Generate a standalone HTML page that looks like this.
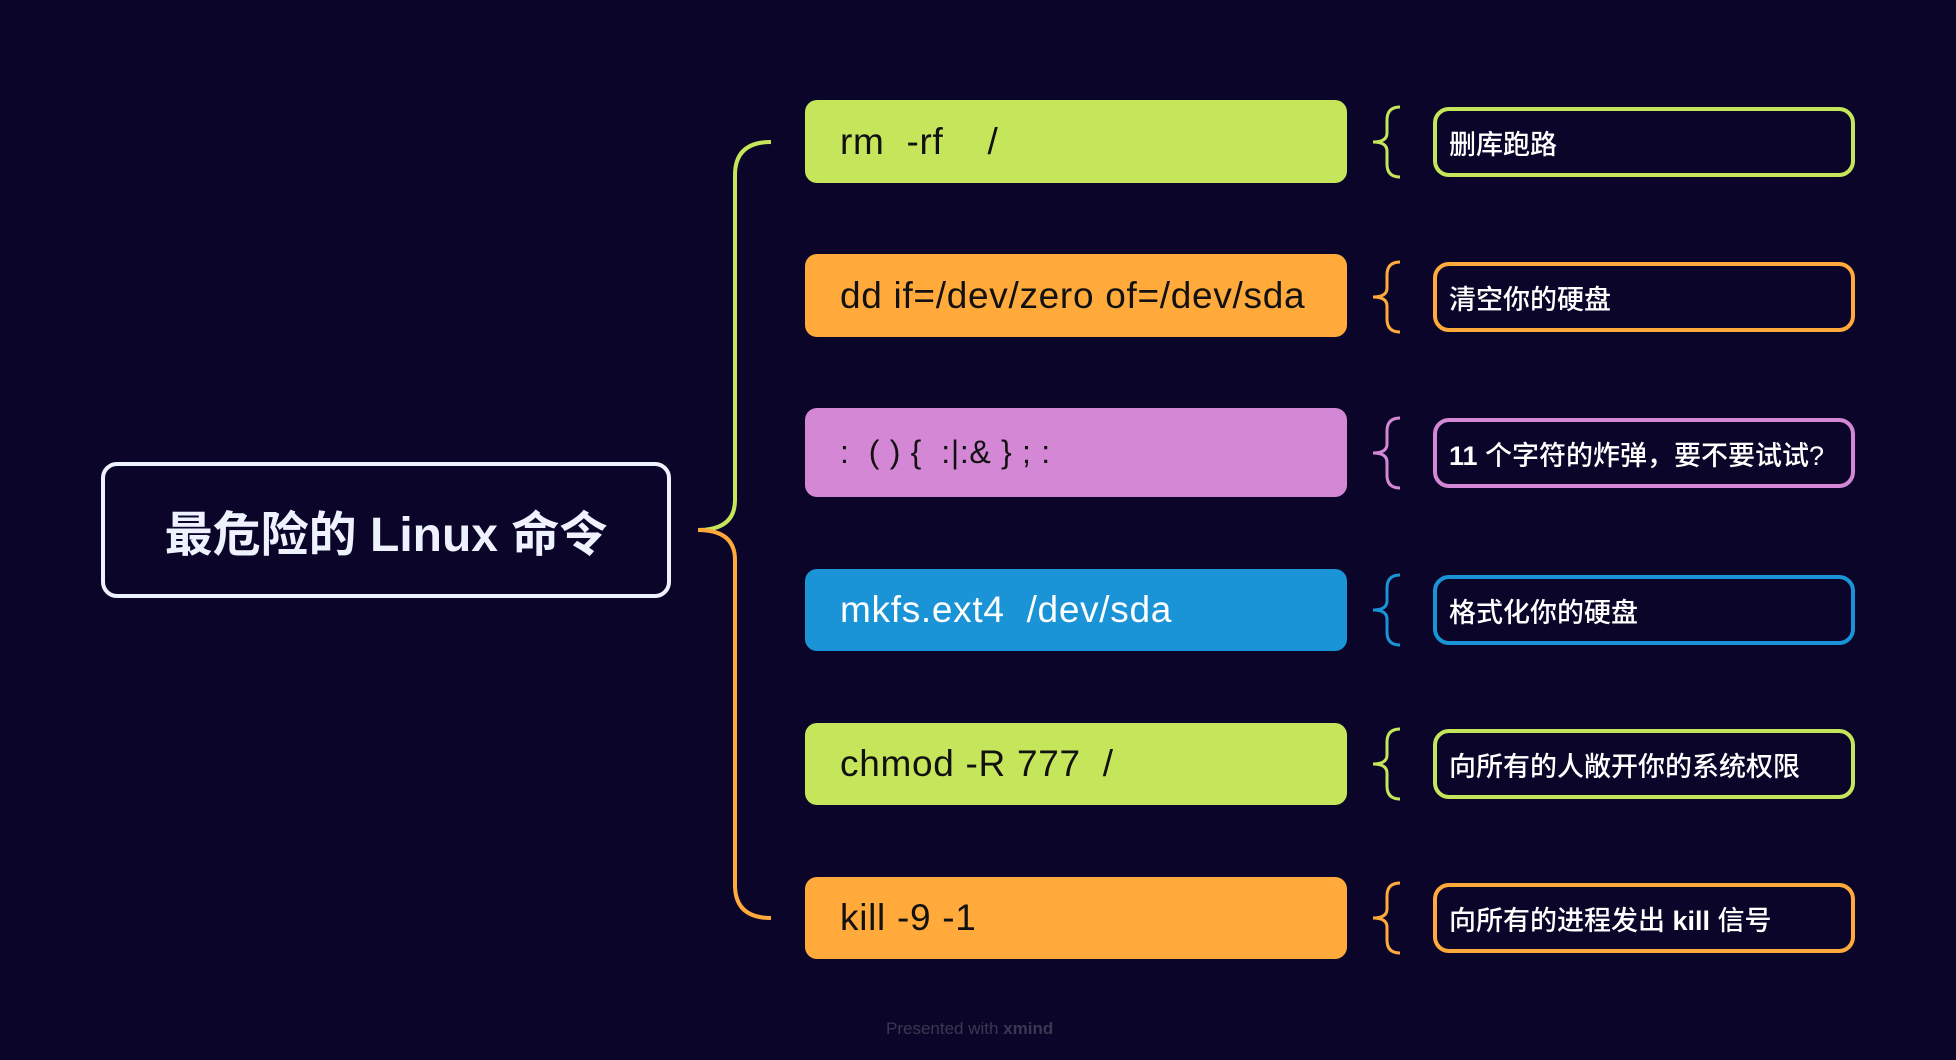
<!DOCTYPE html>
<html><head><meta charset="utf-8"><style>
html,body{margin:0;padding:0;}
body{width:1956px;height:1060px;background:#0b0629;position:relative;overflow:hidden;font-family:"Liberation Sans","Noto Sans CJK SC",sans-serif;}
.main{position:absolute;left:101px;top:462px;width:562px;height:128px;border:4px solid #eef2ff;border-radius:16px;box-sizing:content-box;display:flex;align-items:center;justify-content:center;color:#eef2ff;font-weight:bold;font-size:48px;}
.cmd{position:absolute;left:805px;width:542px;border-radius:12px;color:#111;font-size:37px;letter-spacing:0.7px;box-sizing:border-box;padding-left:35px;display:flex;align-items:center;}
.desc{position:absolute;left:1433px;width:422px;border:4px solid;border-radius:16px;box-sizing:border-box;color:#fff;font-size:27px;font-weight:500;padding-left:12px;display:flex;align-items:center;font-family:"Liberation Sans","Noto Sans CJK SC",sans-serif;}
.foot{position:absolute;left:886px;top:1019px;font-size:17px;color:#3a3750;}
</style></head><body>
<svg width="1956" height="1060" style="position:absolute;left:0;top:0">
<path d="M771 142 Q735 142 735 175 L735 500 Q735 530 698 530" fill="none" stroke="#c5e55a" stroke-width="4"/>
<path d="M698 530 Q735 530 735 560 L735 885 Q735 918 771 918" fill="none" stroke="#ffaa3b" stroke-width="4"/>
<g fill="none" stroke-width="3">
<path d="M1400 107 Q1387 107 1387 120 L1387 133 Q1387 142 1373 142 Q1387 142 1387 151 L1387 164 Q1387 177 1400 177" stroke="#c5e55a"/>
<path d="M1400 262 Q1387 262 1387 275 L1387 288 Q1387 297 1373 297 Q1387 297 1387 306 L1387 319 Q1387 332 1400 332" stroke="#ffaa3b"/>
<path d="M1400 418 Q1387 418 1387 431 L1387 444 Q1387 453 1373 453 Q1387 453 1387 462 L1387 475 Q1387 488 1400 488" stroke="#d487d4"/>
<path d="M1400 575 Q1387 575 1387 588 L1387 601 Q1387 610 1373 610 Q1387 610 1387 619 L1387 632 Q1387 645 1400 645" stroke="#1a94d6"/>
<path d="M1400 729 Q1387 729 1387 742 L1387 755 Q1387 764 1373 764 Q1387 764 1387 773 L1387 786 Q1387 799 1400 799" stroke="#c5e55a"/>
<path d="M1400 883 Q1387 883 1387 896 L1387 909 Q1387 918 1373 918 Q1387 918 1387 927 L1387 940 Q1387 953 1400 953" stroke="#ffaa3b"/>
</g>
</svg>
<div class="main">最危险的 Linux 命令</div>
<div class="cmd" style="top:100px;height:83px;background:#c5e55a">rm&nbsp;&nbsp;-rf&nbsp;&nbsp;&nbsp;&nbsp;/</div>
<div class="cmd" style="top:254px;height:83px;background:#ffaa3b">dd if=/dev/zero of=/dev/sda</div>
<div class="cmd" style="top:408px;height:89px;background:#d487d4;font-size:32px">:&nbsp;&nbsp;( ) {&nbsp;&nbsp;:|:&amp; } ; :</div>
<div class="cmd" style="top:569px;height:82px;background:#1a94d6;color:#fff">mkfs.ext4&nbsp;&nbsp;/dev/sda</div>
<div class="cmd" style="top:723px;height:82px;background:#c5e55a">chmod -R 777&nbsp;&nbsp;/</div>
<div class="cmd" style="top:877px;height:82px;background:#ffaa3b">kill -9 -1</div>
<div class="desc" style="top:107px;height:70px;border-color:#c5e55a">删库跑路</div>
<div class="desc" style="top:262px;height:70px;border-color:#ffaa3b">清空你的硬盘</div>
<div class="desc" style="top:418px;height:70px;border-color:#d487d4"><span><b>11</b> 个字符的炸弹，要不要试试?</span></div>
<div class="desc" style="top:575px;height:70px;border-color:#1a94d6">格式化你的硬盘</div>
<div class="desc" style="top:729px;height:70px;border-color:#c5e55a">向所有的人敞开你的系统权限</div>
<div class="desc" style="top:883px;height:70px;border-color:#ffaa3b"><span>向所有的进程发出 <b>kill</b> 信号</span></div>
<div class="foot">Presented with <b>xmind</b></div>
</body></html>
